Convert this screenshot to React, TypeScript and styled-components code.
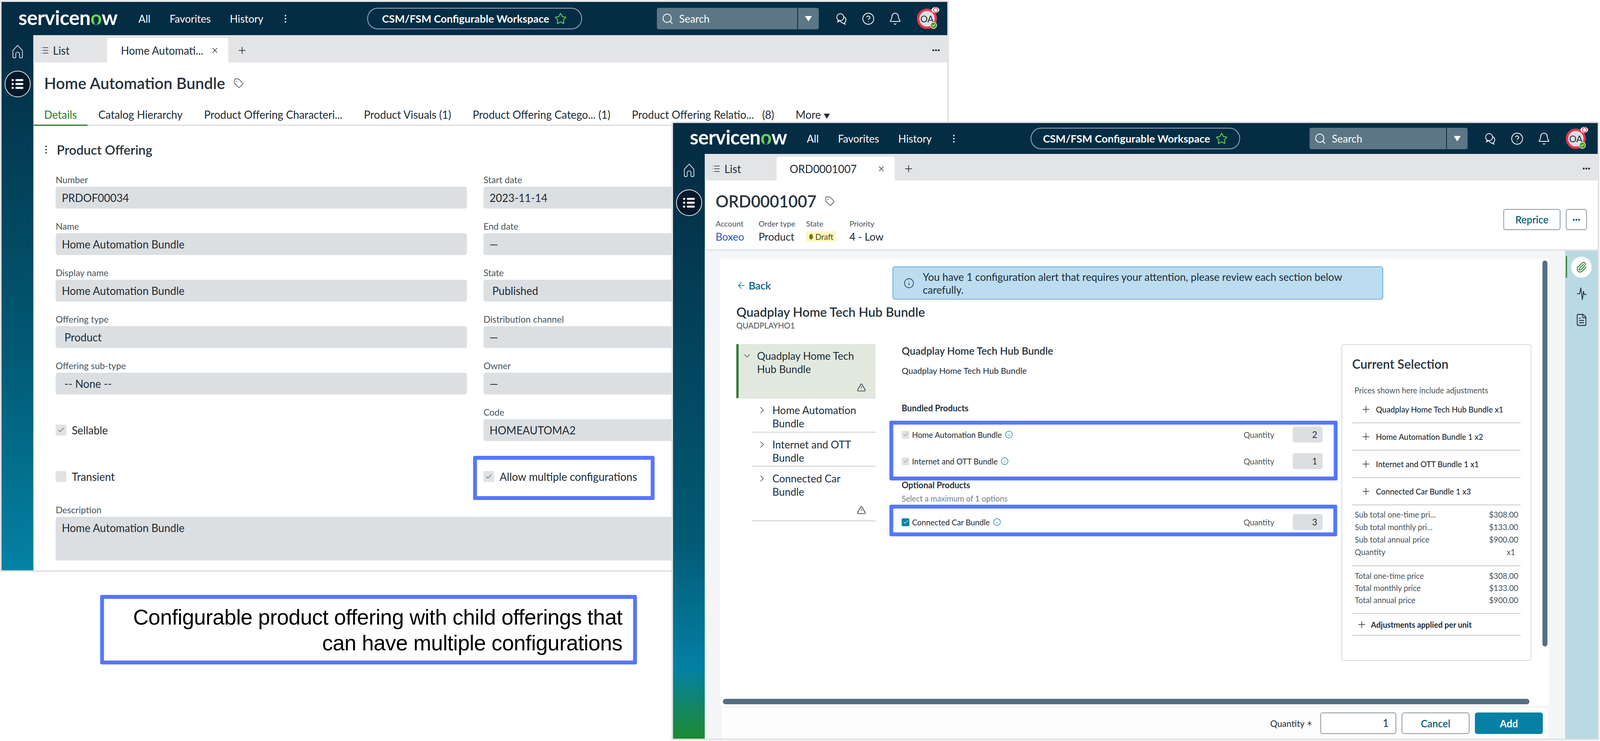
import * as React from 'react';
import styled, { createGlobalStyle } from 'styled-components';
import {
  ArrowLeft,
  Asterisk,
  Bell,
  Check,
  ChevronDown,
  ChevronRight,
  CircleHelp,
  FileText,
  Info,
  List,
  Paperclip,
  Plus,
  Search,
  Star,
  Tag,
  TriangleAlert,
  X,
} from 'lucide-react';

const navy = '#042d44';
const ink = '#1d2b35';
const muted = '#46535d';
const teal = '#04617e';
const fieldGrey = '#dcdfe2';
const highlight = '#5577ff';
const designWidth = 4170;

const GlobalStyle = createGlobalStyle`
  html, body {
    margin: 0;
    padding: 0;
    background: #fff;
    overflow: hidden;
  }
  body {
    font-family: Lato, "Open Sans", sans-serif;
    color: ${ink};
  }
  * {
    box-sizing: border-box;
  }
`;

const Canvas = styled.div`
  position: relative;
  width: ${designWidth}px;
  height: 1897px;
  overflow: hidden;
  background: #fff;
  transform-origin: top left;
`;

const Window = styled.section<{ $left: number; $top: number; $width: number; $height: number }>`
  position: absolute;
  left: ${(p) => p.$left}px;
  top: ${(p) => p.$top}px;
  width: ${(p) => p.$width}px;
  height: ${(p) => p.$height}px;
  border: 4px solid #dfe1e3;
  background: #fff;
  display: flex;
  flex-direction: column;
  overflow: hidden;
`;

const Highlight = styled.div<{ $left: number; $top: number; $width: number; $height: number }>`
  position: absolute;
  left: ${(p) => p.$left}px;
  top: ${(p) => p.$top}px;
  width: ${(p) => p.$width}px;
  height: ${(p) => p.$height}px;
  border: 10px solid ${highlight};
  border-radius: 4px;
  pointer-events: none;
`;

const Caption = styled.div`
  position: absolute;
  left: 261px;
  top: 1523px;
  width: 1399px;
  height: 178px;
  border: 10px solid ${highlight};
  border-radius: 4px;
  padding: 14px 28px 0 0;
  font-family: 'Liberation Sans', Arial, sans-serif;
  font-size: 56px;
  line-height: 66px;
  letter-spacing: -0.55px;
  text-align: right;
  color: #000;
`;

/* top bar */
const TopNav = styled.header<{ $height: number; $pad: number }>`
  flex: none;
  height: ${(p) => p.$height}px;
  background: ${navy};
  color: #fff;
  display: grid;
  grid-template-columns: 1fr auto 1fr;
  align-items: center;
  padding: 0 ${(p) => p.$pad}px;
`;

const NavLeft = styled.div<{ $pad: number }>`
  display: flex;
  align-items: center;
  padding-left: ${(p) => p.$pad}px;
`;

const Logo = styled.div<{ $size: number; $gap: number }>`
  font-size: ${(p) => p.$size}px;
  font-weight: 700;
  line-height: 1;
  letter-spacing: -0.6px;
  color: #fff;
  margin-right: ${(p) => p.$gap}px;
  margin-top: -8px;
`;

const LogoO = styled.span`
  position: relative;
  display: inline-block;
  color: #62d84e;

  &::after {
    content: '';
    position: absolute;
    left: 36%;
    bottom: 13%;
    width: 28%;
    height: 16%;
    border-radius: 50% 50% 0 0;
    background: ${navy};
  }
`;

const NavLink = styled.span`
  font-size: 27px;
  margin-right: 50px;
`;

const KebabDots = styled.span<{ $dark?: boolean }>`
  display: inline-flex;
  flex-direction: column;
  gap: 4px;
  margin-left: 6px;

  i {
    display: block;
    width: 4px;
    height: 4px;
    border-radius: 50%;
    background: ${(p) => (p.$dark ? ink : '#fff')};
  }
`;

const WorkspacePill = styled.div<{ $width: number }>`
  width: ${(p) => p.$width}px;
  height: 55px;
  border: 2px solid #9fb0ba;
  border-radius: 28px;
  display: flex;
  align-items: center;
  justify-content: center;
  gap: 14px;
  font-size: 27.5px;
  font-weight: 700;
`;

const NavRight = styled.div`
  display: flex;
  align-items: center;
  justify-content: flex-end;
`;

const SearchBox = styled.div<{ $width: number }>`
  width: ${(p) => p.$width}px;
  height: 55px;
  border-radius: 5px;
  background: #5c7685;
  display: flex;
  align-items: center;
  margin-right: 42px;
  color: #fff;
`;

const SearchField = styled.div`
  flex: 1;
  display: flex;
  align-items: center;
  gap: 14px;
  padding-left: 12px;
  font-size: 27px;
`;

const SearchCaret = styled.div`
  width: 56px;
  height: 100%;
  border-left: 2px solid ${navy};
  display: flex;
  align-items: center;
  justify-content: center;

  &::after {
    content: '';
    border-left: 9px solid transparent;
    border-right: 9px solid transparent;
    border-top: 14px solid #fff;
  }
`;

const IconRow = styled.div`
  display: flex;
  align-items: center;
  gap: 36px;
`;

const IconBox = styled.span`
  width: 34px;
  height: 34px;
  display: flex;
  align-items: center;
  justify-content: center;
`;

const Avatar = styled.div`
  position: relative;
  width: 52px;
  height: 52px;
  margin-left: 40px;
  border: 6px solid #f0324e;
  border-radius: 50%;
  background: #dfe1e3;
  color: ${ink};
  font-size: 24px;
  display: flex;
  align-items: center;
  justify-content: center;
`;

const AvatarEye = styled.span`
  position: absolute;
  top: -10px;
  right: -12px;
  width: 20px;
  height: 15px;
  border-radius: 50%;
  background: #fff;
  display: flex;
  align-items: center;
  justify-content: center;

  &::after {
    content: '';
    width: 9px;
    height: 9px;
    border-radius: 50%;
    border: 2px solid #f0324e;
    background: #fff;
  }
`;

const AvatarBadge = styled.span`
  position: absolute;
  right: -6px;
  bottom: -6px;
  width: 18px;
  height: 18px;
  border-radius: 50%;
  border: 2px solid #dfe1e3;
  background: #3f9a14;
  color: #fff;
  display: flex;
  align-items: center;
  justify-content: center;
`;

/* rail + body */
const WindowBody = styled.div`
  flex: 1;
  min-height: 0;
  display: flex;
`;

const Rail = styled.nav<{ $gradient: string }>`
  flex: none;
  width: 83px;
  background: ${(p) => p.$gradient};
  display: flex;
  flex-direction: column;
  align-items: center;
  padding-top: 25px;
  color: #d9e0e4;
`;

const RailMenu = styled.div`
  width: 68px;
  height: 68px;
  margin-top: 32px;
  border-radius: 50%;
  border: 2px solid #e4e8ea;
  background: #03192a;
  display: flex;
  align-items: center;
  justify-content: center;
  color: #fff;
`;

const Main = styled.main`
  flex: 1;
  min-width: 0;
  display: flex;
  flex-direction: column;
`;

const TabBar = styled.div<{ $height: number }>`
  flex: none;
  height: ${(p) => p.$height}px;
  background: #e3e4e6;
  display: flex;
  align-items: flex-end;
  padding-right: 20px;
  font-size: 28px;
`;

const ListTab = styled.div<{ $width: number }>`
  width: ${(p) => p.$width}px;
  height: 100%;
  display: flex;
  align-items: center;
  gap: 10px;
  padding-left: 17px;
  padding-top: 7px;
`;

const ActiveTab = styled.div<{ $width: number; $padLeft: number }>`
  width: ${(p) => p.$width}px;
  height: calc(100% - 7px);
  background: #fff;
  border-radius: 6px 6px 0 0;
  display: flex;
  align-items: center;
  justify-content: space-between;
  padding: 0 24px 0 ${(p) => p.$padLeft}px;
`;

const NewTab = styled.span`
  display: flex;
  height: 100%;
  align-items: center;
  margin-left: 22px;
  padding-top: 7px;
`;

const TabOverflow = styled.span`
  margin-left: auto;
  display: flex;
  align-self: center;
  gap: 2px;
  padding-top: 7px;

  i {
    width: 5px;
    height: 5px;
    border-radius: 50%;
    background: ${ink};
  }
`;

const TitleRow = styled.div<{ $top: number }>`
  display: flex;
  align-items: center;
  gap: 22px;
  padding-top: ${(p) => p.$top}px;
`;

const PageTitle = styled.h1<{ $size: number }>`
  margin: 0;
  font-size: ${(p) => p.$size}px;
  line-height: 50px;
  font-weight: 600;
  color: #25323b;
`;

const OfferingHeader = styled.div`
  flex: none;
  height: 105px;
  padding-left: 28px;
`;

const RecordTabs = styled.div`
  flex: none;
  height: 57px;
  display: flex;
  border-bottom: 3px solid #d9dcdf;
  font-size: 28px;
`;

const RecordTab = styled.div<{ $active?: boolean }>`
  height: 57px;
  line-height: 56px;
  padding: 0 28px;
  white-space: nowrap;
  color: ${(p) => (p.$active ? '#2b7a26' : ink)};
  border-bottom: ${(p) => (p.$active ? '3px solid #2b7a26' : 'none')};
`;

const MoreCaret = styled.span`
  display: inline-block;
  margin-left: 8px;
  border-left: 8px solid transparent;
  border-right: 8px solid transparent;
  border-top: 13px solid ${ink};
`;

const SectionHeader = styled.div`
  flex: none;
  height: 125px;
  display: flex;
  align-items: center;
  padding: 34px 0 37px 25px;
  gap: 26px;
  font-size: 33.5px;
  font-weight: 600;
  color: #25323b;
`;

const FormGrid = styled.div`
  display: grid;
  grid-template-columns: 1072px 1072px;
  column-gap: 43px;
  row-gap: 32px;
  padding-left: 58px;
`;

const FormCell = styled.div<{ $full?: boolean }>`
  height: 87px;
  grid-column: ${(p) => (p.$full ? '1 / -1' : 'auto')};
`;

const FieldLabel = styled.div`
  height: 26px;
  line-height: 26px;
  margin-bottom: 5px;
  font-size: 23.5px;
  color: ${muted};
`;

const ReadOnlyField = styled.div<{ $padLeft?: number; $tall?: boolean }>`
  height: ${(p) => (p.$tall ? '112px' : '56px')};
  border-radius: 6px;
  background: ${fieldGrey};
  padding: 0 16px 0 ${(p) => p.$padLeft ?? 16}px;
  line-height: 56px;
  font-size: 28px;
`;

const CheckCell = styled.label`
  height: 87px;
  padding-top: 31px;
  display: flex;
  align-items: center;
  gap: 14px;
  font-size: 28px;
`;

const CheckBox = styled.span<{ $checked?: boolean; $small?: boolean }>`
  flex: none;
  width: ${(p) => (p.$small ? '20px' : '28px')};
  height: ${(p) => (p.$small ? '20px' : '28px')};
  border-radius: 3px;
  background: ${(p) => (p.$checked ? '#0680a4' : '#e0e2e4')};
  color: ${(p) => (p.$checked ? '#fff' : '#4b5862')};
  display: flex;
  align-items: center;
  justify-content: center;
`;

const DescriptionCell = styled(FormCell)`
  height: 143px;
  margin-top: 12px;
`;

/* order record */
const RecordHeader = styled.div`
  flex: none;
  height: 180px;
  border-bottom: 4px solid #e3e5e7;
  padding: 0 28px;
  display: flex;
  justify-content: space-between;
`;

const MetaRow = styled.div`
  display: flex;
  margin-top: 19px;
`;

const MetaItem = styled.div<{ $width: number }>`
  width: ${(p) => p.$width}px;
`;

const MetaLabel = styled.div`
  font-size: 20px;
  line-height: 26px;
  color: ${muted};
`;

const MetaValue = styled.div<{ $link?: boolean }>`
  font-size: 27px;
  line-height: 42px;
  color: ${(p) => (p.$link ? '#1f55c7' : ink)};
`;

const StatePill = styled.span`
  display: inline-flex;
  align-items: center;
  gap: 6px;
  height: 27px;
  margin-top: 7px;
  padding: 0 7px 0 8px;
  border-radius: 3px;
  background: #fdf6bf;
  font-size: 20.5px;
  color: #4a4a1c;

  &::before {
    content: '';
    width: 10px;
    height: 14px;
    border-radius: 50%;
    background: #7d7600;
  }
`;

const HeaderActions = styled.div`
  display: flex;
  gap: 14px;
  padding-top: 73px;
`;

const OutlineButton = styled.button<{ $width: number; $height: number }>`
  width: ${(p) => p.$width}px;
  height: ${(p) => p.$height}px;
  border: 2px solid #8b979f;
  border-radius: 6px;
  background: #fff;
  color: ${teal};
  font-family: inherit;
  font-size: 26px;
  font-weight: 600;
  padding: 0;
  display: flex;
  align-items: center;
  justify-content: center;
  gap: 2px;

  i {
    width: 5px;
    height: 5px;
    border-radius: 50%;
    background: ${teal};
  }
`;

const RecordBody = styled.div`
  flex: 1;
  min-height: 0;
  display: flex;
`;

const ContentColumn = styled.div`
  flex: 1;
  min-width: 0;
  background: #f4f5f7;
  padding-top: 20px;
  display: flex;
  flex-direction: column;
`;

const ScrollPanel = styled.div`
  position: relative;
  height: 1145px;
  margin: 0 42px 0 40px;
  padding: 20px 42px 0;
  background: #fff;
  overflow: hidden;
`;

const ScrollThumbY = styled.div`
  position: absolute;
  top: 5px;
  right: 4px;
  width: 13px;
  height: 988px;
  border-radius: 7px;
  background: #546f80;
`;

const ScrollThumbX = styled.div`
  position: absolute;
  left: 7px;
  bottom: 4px;
  width: 2102px;
  height: 14px;
  border-radius: 7px;
  background: #546f80;
`;

const ConfigTop = styled.div`
  display: flex;
`;

const BackLink = styled.div`
  width: 407px;
  display: flex;
  align-items: center;
  gap: 6px;
  padding-top: 12px;
  font-size: 27px;
  font-weight: 600;
  color: ${teal};
`;

const AlertBanner = styled.div`
  width: 1279px;
  height: 85px;
  border: 2px solid #6aa9dc;
  border-radius: 6px;
  background: #bcdcf0;
  display: flex;
  align-items: center;
  gap: 22px;
  padding-left: 27px;
  font-size: 27px;
  line-height: 33px;
  color: #1d2b35;
`;

const AlertText = styled.div`
  width: 1130px;
`;

const ConfigTitle = styled.h2`
  margin: 15px 0 0;
  font-size: 33px;
  line-height: 32px;
  font-weight: 600;
  color: #25323b;
`;

const ConfigCode = styled.div`
  margin-top: 3px;
  font-size: 20.5px;
  line-height: 32px;
  color: ${muted};
`;

const ConfigColumns = styled.div`
  display: flex;
  margin-top: 32px;
`;

const TreeColumn = styled.div`
  flex: none;
  width: 363px;
  margin-right: 68px;
`;

const TreeSelected = styled.div`
  height: 139px;
  border-left: 6px solid #2f7d32;
  border-bottom: 2px solid #d9dcdf;
  background: #e1e9de;
  padding: 13px 0 0 9px;
  position: relative;
  display: flex;
  gap: 13px;
`;

const TreeItem = styled.div<{ $height: number }>`
  position: relative;
  height: ${(p) => p.$height}px;
  margin-left: 40px;
  padding: 13px 12px 0 13px;
  border-bottom: 3px solid #d7dbde;
  display: flex;
  gap: 13px;
`;

const TreeLabel = styled.div`
  font-size: 27px;
  line-height: 33.5px;
  color: #1d2b35;
`;

const TreeChevron = styled.span`
  flex: none;
  height: 33px;
  display: flex;
  align-items: center;
  color: #3d4a55;
`;

const TreeWarning = styled.span`
  position: absolute;
  right: 25px;
  bottom: 14px;
  display: flex;
  color: #1d2b35;
`;

const BundleColumn = styled.div`
  flex: none;
  width: 1097px;
  margin-right: 49px;
`;

const BundleHeading = styled.div`
  font-size: 26.5px;
  line-height: 34px;
  font-weight: 600;
  color: #25323b;
`;

const BundleDescription = styled.div`
  margin-top: 19px;
  font-size: 22px;
  line-height: 30px;
`;

const GroupTitle = styled.div<{ $top: number }>`
  margin-top: ${(p) => p.$top}px;
  font-size: 22px;
  line-height: 30px;
  font-weight: 700;
  color: #25323b;
`;

const GroupHint = styled.div`
  margin-top: 4px;
  font-size: 20.5px;
  line-height: 30px;
  color: #717d87;
`;

const ProductRow = styled.div<{ $top: number }>`
  margin-top: ${(p) => p.$top}px;
  height: 41px;
  display: flex;
  align-items: center;
  font-size: 20.5px;
`;

const ProductName = styled.span`
  margin-left: 7px;
  margin-right: 8px;
`;

const InfoMark = styled.span`
  display: flex;
  color: #0b7ea3;
`;

const QuantityLabel = styled.span`
  margin-left: auto;
  margin-right: 48px;
  color: ${muted};
`;

const QuantityValue = styled.span`
  width: 78px;
  height: 41px;
  border-radius: 6px;
  background: ${fieldGrey};
  padding-right: 14px;
  text-align: right;
  line-height: 41px;
  font-size: 23px;
`;

const SelectionCard = styled.aside`
  flex: none;
  width: 495px;
  height: 811px;
  border: 2px solid #d5d9dc;
  border-radius: 6px;
  padding: 24px 26px 0;
`;

const SelectionTitle = styled.h3`
  margin: 0;
  font-size: 32.5px;
  line-height: 50px;
  font-weight: 600;
  color: #25323b;
`;

const SelectionHint = styled.div`
  margin-top: 28px;
  padding-left: 6px;
  font-size: 20.5px;
  line-height: 29px;
  color: ${muted};
`;

const SelectionRow = styled.div<{ $height: number; $indent: number; $bold?: boolean }>`
  height: ${(p) => p.$height}px;
  border-bottom: 3px solid #d5d9dc;
  display: flex;
  align-items: center;
  gap: ${(p) => (p.$bold ? 10 : 12)}px;
  padding-left: ${(p) => p.$indent}px;
  font-size: 20.5px;
  font-weight: ${(p) => (p.$bold ? 700 : 500)};
`;

const PriceGroup = styled.div<{ $top: number; $bottom: number; $line: number }>`
  padding: ${(p) => p.$top}px 6px ${(p) => p.$bottom}px 7px;
  border-bottom: 3px solid #d5d9dc;
  line-height: ${(p) => p.$line}px;
  font-size: 20.5px;
  color: ${muted};
`;

const PriceRow = styled.div<{ $inset?: boolean }>`
  display: flex;
  justify-content: space-between;
  padding-right: ${(p) => (p.$inset ? 8 : 0)}px;
`;

const FooterBar = styled.div`
  flex: 1;
  margin: 5px 44px 0 44px;
  background: #fdfdfd;
  display: flex;
  align-items: center;
  justify-content: flex-end;
  gap: 14px;
  padding: 0 14px 0 0;
`;

const FooterLabel = styled.span`
  display: flex;
  align-items: center;
  gap: 2px;
  margin-right: 3px;
  font-size: 23px;
`;

const FooterInput = styled.div`
  width: 198px;
  height: 55px;
  border: 2px solid #8b979f;
  border-radius: 6px;
  background: #fff;
  padding-right: 18px;
  text-align: right;
  line-height: 51px;
  font-size: 26px;
`;

const PrimaryButton = styled.button`
  width: 177px;
  height: 55px;
  border: 0;
  border-radius: 6px;
  background: #0680a4;
  color: #fff;
  font-family: inherit;
  font-size: 26px;
  font-weight: 700;
`;

const SideBar = styled.div`
  flex: none;
  width: 85px;
  background: #b9d9e3;
  display: flex;
  flex-direction: column;
  align-items: center;
  padding-top: 15px;
  position: relative;
  color: ${ink};
`;

const SideActive = styled.div`
  width: 53px;
  height: 54px;
  border-radius: 27px;
  background: #fff;
  color: #2b7a26;
  display: flex;
  align-items: center;
  justify-content: center;

  &::before {
    content: '';
    position: absolute;
    left: 2px;
    top: 14px;
    width: 3px;
    height: 55px;
    background: #2b7a26;
  }
`;

const SideIcon = styled.span<{ $top: number }>`
  display: flex;
  margin-top: ${(p) => p.$top}px;
`;

/* drawings */
const HomeGlyph = () => (
  <svg width="34" height="36" viewBox="0 0 24 26" fill="none" stroke="currentColor" strokeWidth="1.4" strokeLinejoin="round">
    <path d="M12 1.5 3 11v11.5a2 2 0 0 0 2 2h2a1.5 1.5 0 0 0 1.5-1.5v-5.5a3.5 3.5 0 0 1 7 0V23a1.5 1.5 0 0 0 1.5 1.5h2a2 2 0 0 0 2-2V11z" />
  </svg>
);

const MenuGlyph = () => (
  <svg width="34" height="30" viewBox="0 0 34 30" fill="currentColor">
    <circle cx="4" cy="5" r="2.8" />
    <rect x="11" y="2.5" width="21" height="5" rx="2.5" />
    <circle cx="4" cy="15" r="2.8" />
    <rect x="11" y="12.5" width="21" height="5" rx="2.5" />
    <circle cx="4" cy="25" r="2.8" />
    <rect x="11" y="22.5" width="21" height="5" rx="2.5" />
  </svg>
);

const ChatGlyph = () => (
  <svg width="30" height="32" viewBox="0 0 30 32" fill="none" stroke="currentColor" strokeWidth="2">
    <circle cx="12" cy="12" r="9" />
    <path d="M7 19.5 5 24l6-3" />
    <path d="M21 11a8.5 8.5 0 0 1 2 15l1.5 4-6-3a8.5 8.5 0 0 1-6.5-6" />
  </svg>
);

const PulseGlyph = () => (
  <svg width="30" height="34" viewBox="0 0 30 34" fill="none" stroke="currentColor" strokeWidth="2" strokeLinejoin="round">
    <path d="M3 17h7l3-15 4 30 3-21 2 8h6" />
  </svg>
);

const KebabIcon = ({ dark }: { dark?: boolean }) => (
  <KebabDots $dark={dark}>
    <i />
    <i />
    <i />
  </KebabDots>
);

const Dots = () => (
  <>
    <i />
    <i />
    <i />
  </>
);

type ShellProps = {
  height: number;
  pad: number;
  logoSize: number;
  logoGap: number;
  pillWidth: number;
  searchWidth: number;
};

const ShellNav: React.FC<ShellProps> = ({ height, pad, logoSize, logoGap, pillWidth, searchWidth }) => (
  <TopNav $height={height} $pad={pad}>
    <NavLeft $pad={44 - pad}>
      <Logo $size={logoSize} $gap={logoGap}>
        servicen<LogoO>o</LogoO>w
      </Logo>
      <NavLink>All</NavLink>
      <NavLink>Favorites</NavLink>
      <NavLink>History</NavLink>
      <KebabIcon />
    </NavLeft>
    <WorkspacePill $width={pillWidth}>
      CSM/FSM Configurable Workspace
      <Star size={32} strokeWidth={1.6} color="#62d84e" />
    </WorkspacePill>
    <NavRight>
      <SearchBox $width={searchWidth}>
        <SearchField>
          <Search size={32} strokeWidth={1.5} />
          Search
        </SearchField>
        <SearchCaret />
      </SearchBox>
      <IconRow>
        <IconBox>
          <ChatGlyph />
        </IconBox>
        <IconBox>
          <CircleHelp size={34} strokeWidth={1.4} />
        </IconBox>
        <IconBox>
          <Bell size={34} strokeWidth={1.4} />
        </IconBox>
      </IconRow>
      <Avatar>
        OA
        <AvatarEye />
        <AvatarBadge>
          <Check size={10} strokeWidth={4} />
        </AvatarBadge>
      </Avatar>
    </NavRight>
  </TopNav>
);

const ShellRail: React.FC<{ gradient: string }> = ({ gradient }) => (
  <Rail $gradient={gradient}>
    <IconBox>
      <HomeGlyph />
    </IconBox>
    <RailMenu>
      <MenuGlyph />
    </RailMenu>
  </Rail>
);

const ShellTabs: React.FC<{ height: number; listWidth: number; tabWidth: number; padLeft: number; label: string }> = ({
  height,
  listWidth,
  tabWidth,
  padLeft,
  label,
}) => (
  <TabBar $height={height}>
    <ListTab $width={listWidth}>
      <List size={24} strokeWidth={1.5} />
      List
    </ListTab>
    <ActiveTab $width={tabWidth} $padLeft={padLeft}>
      {label}
      <X size={22} strokeWidth={1.5} />
    </ActiveTab>
    <NewTab>
      <Plus size={28} strokeWidth={1.5} />
    </NewTab>
    <TabOverflow>
      <Dots />
    </TabOverflow>
  </TabBar>
);

const offeringTabs = [
  'Details',
  'Catalog Hierarchy',
  'Product Offering Characteri...',
  'Product Visuals (1)',
  'Product Offering Catego... (1)',
  'Product Offering Relatio...\u00a0\u00a0\u00a0(8)',
];

const formRows = [
  ['Number', 'PRDOF00034', 'Start date', '2023-11-14'],
  ['Name', 'Home Automation Bundle', 'End date', '—'],
  ['Display name', 'Home Automation Bundle', 'State', 'Published'],
  ['Offering type', 'Product', 'Distribution channel', '—'],
  ['Offering sub-type', '-- None --', 'Owner', '—'],
];

const selectPadded = ['Product', '-- None --', 'Published'];

const OfferingWindow = () => (
  <Window $left={0} $top={1} $width={2473} $height={1463}>
    <ShellNav height={85} pad={27} logoSize={52} logoGap={55} pillWidth={560} searchWidth={422} />
    <WindowBody>
      <ShellRail gradient={`linear-gradient(180deg, ${navy} 0%, #015a75 60%, #0482a4 100%)`} />
      <Main>
        <ShellTabs height={70} listWidth={192} tabWidth={316} padLeft={36} label="Home Automati..." />
        <OfferingHeader>
          <TitleRow $top={28}>
            <PageTitle $size={41}>Home Automation Bundle</PageTitle>
            <Tag size={26} strokeWidth={1.5} color="#46535d" />
          </TitleRow>
        </OfferingHeader>
        <RecordTabs>
          {offeringTabs.map((tab, i) => (
            <RecordTab key={tab} $active={i === 0}>
              {tab}
            </RecordTab>
          ))}
          <RecordTab>
            More
            <MoreCaret />
          </RecordTab>
        </RecordTabs>
        <SectionHeader>
          <KebabIcon dark />
          Product Offering
        </SectionHeader>
        <FormGrid>
          {formRows.map(([leftLabel, leftValue, rightLabel, rightValue]) => (
            <React.Fragment key={leftLabel}>
              <FormCell>
                <FieldLabel>{leftLabel}</FieldLabel>
                <ReadOnlyField $padLeft={selectPadded.includes(leftValue) ? 23 : 16}>{leftValue}</ReadOnlyField>
              </FormCell>
              <FormCell>
                <FieldLabel>{rightLabel}</FieldLabel>
                <ReadOnlyField $padLeft={selectPadded.includes(rightValue) ? 23 : 16}>{rightValue}</ReadOnlyField>
              </FormCell>
            </React.Fragment>
          ))}
          <CheckCell>
            <CheckBox>
              <Check size={20} strokeWidth={1.6} />
            </CheckBox>
            Sellable
          </CheckCell>
          <FormCell>
            <FieldLabel>Code</FieldLabel>
            <ReadOnlyField>HOMEAUTOMA2</ReadOnlyField>
          </FormCell>
          <CheckCell>
            <CheckBox />
            Transient
          </CheckCell>
          <CheckCell>
            <CheckBox>
              <Check size={20} strokeWidth={1.6} />
            </CheckBox>
            Allow multiple configurations
          </CheckCell>
          <DescriptionCell $full>
            <FieldLabel>Description</FieldLabel>
            <ReadOnlyField $tall>Home Automation Bundle</ReadOnlyField>
          </DescriptionCell>
        </FormGrid>
      </Main>
    </WindowBody>
    <Highlight $left={1229} $top={1162} $width={473} $height={113} />
  </Window>
);

const treeItems = [
  { label: ['Home Automation', 'Bundle'], height: 88, warn: false },
  { label: ['Internet and OTT', 'Bundle'], height: 87, warn: false },
  { label: ['Connected Car', 'Bundle'], height: 140, warn: true },
];

const selectionRows = [
  'Quadplay Home Tech Hub Bundle x1',
  'Home Automation Bundle 1 x2',
  'Internet and OTT Bundle 1 x1',
  'Connected Car Bundle 1 x3',
];

const subTotals = [
  ['Sub total one-time pri...', '$308.00'],
  ['Sub total monthly pri...', '$133.00'],
  ['Sub total annual price', '$900.00'],
];

const totals = [
  ['Total one-time price', '$308.00'],
  ['Total monthly price', '$133.00'],
  ['Total annual price', '$900.00'],
];

const OrderWindow = () => (
  <Window $left={1750} $top={311} $width={2418} $height={1584}>
    <ShellNav height={79} pad={31} logoSize={51} logoGap={52} pillWidth={546} searchWidth={412} />
    <WindowBody>
      <ShellRail gradient={`linear-gradient(180deg, ${navy} 0%, #025a75 66%, #0480a4 88%, #1e8a32 100%)`} />
      <Main>
        <ShellTabs height={68} listWidth={187} tabWidth={308} padLeft={34} label="ORD0001007" />
        <RecordHeader>
          <div>
            <TitleRow $top={28}>
              <PageTitle $size={42}>ORD0001007</PageTitle>
              <Tag size={26} strokeWidth={1.5} color="#46535d" />
            </TitleRow>
            <MetaRow>
              <MetaItem $width={112}>
                <MetaLabel>Account</MetaLabel>
                <MetaValue $link>Boxeo</MetaValue>
              </MetaItem>
              <MetaItem $width={124}>
                <MetaLabel>Order type</MetaLabel>
                <MetaValue>Product</MetaValue>
              </MetaItem>
              <MetaItem $width={113}>
                <MetaLabel>State</MetaLabel>
                <StatePill>Draft</StatePill>
              </MetaItem>
              <MetaItem $width={100}>
                <MetaLabel>Priority</MetaLabel>
                <MetaValue>4 - Low</MetaValue>
              </MetaItem>
            </MetaRow>
          </div>
          <HeaderActions>
            <OutlineButton $width={149} $height={54}>
              Reprice
            </OutlineButton>
            <OutlineButton $width={55} $height={54}>
              <Dots />
            </OutlineButton>
          </HeaderActions>
        </RecordHeader>
        <RecordBody>
          <ContentColumn>
            <ScrollPanel>
              <ConfigTop>
                <BackLink>
                  <ArrowLeft size={26} strokeWidth={1.4} />
                  Back
                </BackLink>
                <AlertBanner>
                  <Info size={28} strokeWidth={1.4} />
                  <AlertText>You have 1 configuration alert that requires your attention, please review each section below carefully.</AlertText>
                </AlertBanner>
              </ConfigTop>
              <ConfigTitle>Quadplay Home Tech Hub Bundle</ConfigTitle>
              <ConfigCode>QUADPLAYHO1</ConfigCode>
              <ConfigColumns>
                <TreeColumn>
                  <TreeSelected>
                    <TreeChevron>
                      <ChevronDown size={26} strokeWidth={1.4} />
                    </TreeChevron>
                    <TreeLabel>
                      Quadplay Home Tech
                      <br />
                      Hub Bundle
                    </TreeLabel>
                    <TreeWarning>
                      <TriangleAlert size={24} strokeWidth={1.6} />
                    </TreeWarning>
                  </TreeSelected>
                  {treeItems.map((item) => (
                    <TreeItem key={item.label[0]} $height={item.height}>
                      <TreeChevron>
                        <ChevronRight size={28} strokeWidth={1.4} />
                      </TreeChevron>
                      <TreeLabel>
                        {item.label[0]}
                        <br />
                        {item.label[1]}
                      </TreeLabel>
                      {item.warn && (
                        <TreeWarning>
                          <TriangleAlert size={24} strokeWidth={1.6} />
                        </TreeWarning>
                      )}
                    </TreeItem>
                  ))}
                </TreeColumn>
                <BundleColumn>
                  <BundleHeading>Quadplay Home Tech Hub Bundle</BundleHeading>
                  <BundleDescription>Quadplay Home Tech Hub Bundle</BundleDescription>
                  <GroupTitle $top={66}>Bundled Products</GroupTitle>
                  <ProductRow $top={32}>
                    <CheckBox $small>
                      <Check size={15} strokeWidth={1.6} />
                    </CheckBox>
                    <ProductName>Home Automation Bundle</ProductName>
                    <InfoMark>
                      <Info size={21} strokeWidth={1.6} />
                    </InfoMark>
                    <QuantityLabel>Quantity</QuantityLabel>
                    <QuantityValue>2</QuantityValue>
                  </ProductRow>
                  <ProductRow $top={27}>
                    <CheckBox $small>
                      <Check size={15} strokeWidth={1.6} />
                    </CheckBox>
                    <ProductName>Internet and OTT Bundle</ProductName>
                    <InfoMark>
                      <Info size={21} strokeWidth={1.6} />
                    </InfoMark>
                    <QuantityLabel>Quantity</QuantityLabel>
                    <QuantityValue>1</QuantityValue>
                  </ProductRow>
                  <GroupTitle $top={26}>Optional Products</GroupTitle>
                  <GroupHint>Select a maximum of 1 options</GroupHint>
                  <ProductRow $top={25}>
                    <CheckBox $small $checked>
                      <Check size={15} strokeWidth={2} />
                    </CheckBox>
                    <ProductName>Connected Car Bundle</ProductName>
                    <InfoMark>
                      <Info size={21} strokeWidth={1.6} />
                    </InfoMark>
                    <QuantityLabel>Quantity</QuantityLabel>
                    <QuantityValue>3</QuantityValue>
                  </ProductRow>
                </BundleColumn>
                <SelectionCard>
                  <SelectionTitle>Current Selection</SelectionTitle>
                  <SelectionHint>Prices shown here include adjustments</SelectionHint>
                  {selectionRows.map((row) => (
                    <SelectionRow key={row} $height={70} $indent={22}>
                      <Plus size={28} strokeWidth={1.3} />
                      {row}
                    </SelectionRow>
                  ))}
                  <PriceGroup $top={7} $bottom={18} $line={32}>
                    {subTotals.map(([name, value]) => (
                      <PriceRow key={name}>
                        <span>{name}</span>
                        <span>{value}</span>
                      </PriceRow>
                    ))}
                    <PriceRow $inset>
                      <span>Quantity</span>
                      <span>x1</span>
                    </PriceRow>
                  </PriceGroup>
                  <PriceGroup $top={9} $bottom={17} $line={31}>
                    {totals.map(([name, value]) => (
                      <PriceRow key={name}>
                        <span>{name}</span>
                        <span>{value}</span>
                      </PriceRow>
                    ))}
                  </PriceGroup>
                  <SelectionRow $height={56} $indent={11} $bold>
                    <Plus size={28} strokeWidth={1.3} />
                    Adjustments applied per unit
                  </SelectionRow>
                </SelectionCard>
              </ConfigColumns>
              <ScrollThumbY />
              <ScrollThumbX />
            </ScrollPanel>
            <FooterBar>
              <FooterLabel>
                Quantity
                <Asterisk size={22} strokeWidth={1.5} />
              </FooterLabel>
              <FooterInput>1</FooterInput>
              <OutlineButton $width={177} $height={55}>
                Cancel
              </OutlineButton>
              <PrimaryButton>Add</PrimaryButton>
            </FooterBar>
          </ContentColumn>
          <SideBar>
            <SideActive>
              <Paperclip size={30} strokeWidth={1.8} />
            </SideActive>
            <SideIcon $top={24}>
              <PulseGlyph />
            </SideIcon>
            <SideIcon $top={33}>
              <FileText size={34} strokeWidth={1.5} />
            </SideIcon>
          </SideBar>
        </RecordBody>
      </Main>
    </WindowBody>
    <Highlight $left={564} $top={762} $width={1168} $height={153} />
    <Highlight $left={564} $top={977} $width={1167} $height={81} />
  </Window>
);

export default function App() {
  // the browser can open narrower than the design, so squeeze the canvas to keep the right edge on screen
  const fit = Math.min(1, window.innerWidth / designWidth);
  return (
    <Canvas style={{ transform: `scaleX(${fit})` }}>
      <GlobalStyle />
      <OfferingWindow />
      <OrderWindow />
      <Caption>
        Configurable product offering with child offerings that
        <br />
        can have multiple configurations
      </Caption>
    </Canvas>
  );
}
